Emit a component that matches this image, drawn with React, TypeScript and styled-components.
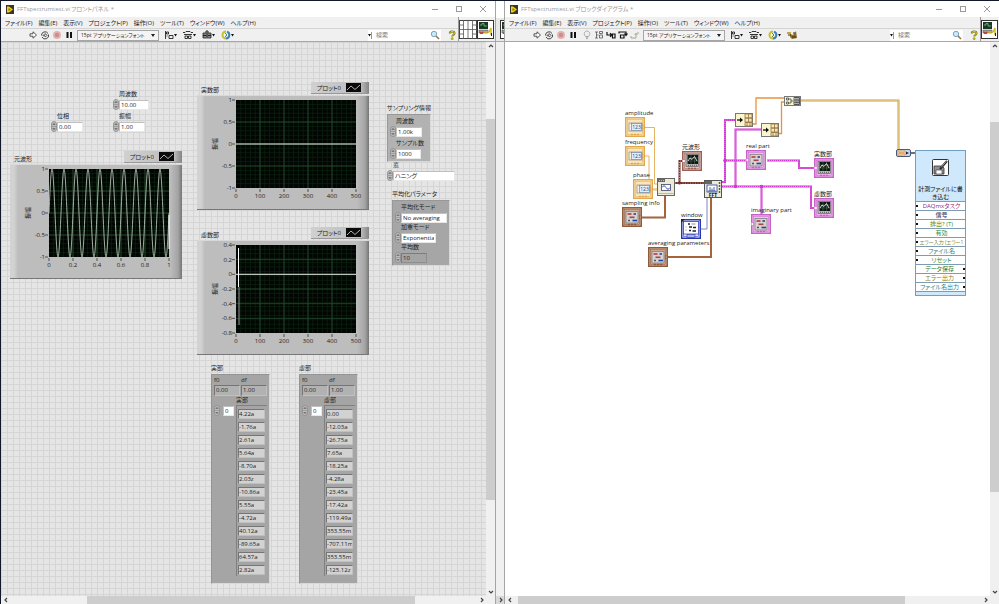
import React from "react";
import styled, { createGlobalStyle, css } from "styled-components";

const GlobalStyle = createGlobalStyle`
  * { box-sizing: border-box; }
  html, body { margin: 0; padding: 0; }
  body {
    font-family: "Open Sans", "Noto Sans CJK JP", sans-serif;
    font-size: 6px;
    line-height: 8px;
    font-feature-settings: "palt";
    color: #222;
    overflow: hidden;
  }
  button, input, select { font: inherit; font-feature-settings: inherit; color: inherit; margin: 0; padding: 0; border: 0; background: none; }
  svg { display: block; }
`;

/* ---------- window chrome ---------- */

const Desktop = styled.div`
  display: flex;
  height: 100vh;
  padding: 1px 0 0 1px;
  background: #12182c;
`;

const Window = styled.section`
  flex: 1 1 0;
  min-width: 0;
  display: flex;
  flex-direction: column;
  background: #f0f0f0;
`;

const TitleBar = styled.header`
  display: flex;
  align-items: center;
  height: 16px;
  flex: none;
  padding: 0 7px 0 5px;
  gap: 3px;
  background: #fff;
  color: #999;
`;

const Title = styled.h1`
  flex: 1;
  margin: 0;
  font-size: 6px;
  font-weight: 400;
  white-space: nowrap;
`;

const WindowButtons = styled.div`
  display: flex;
  gap: 14px;
`;

const IconButton = styled.button<{ $w?: number }>`
  width: ${(p) => p.$w ?? 10}px;
  height: 10px;
  flex: none;
  display: flex;
  align-items: center;
  justify-content: center;
`;

const Header = styled.div`
  display: flex;
  flex: none;
  height: 25px;
  border-bottom: 1px solid #a8a8a8;
`;

const Bars = styled.div`
  flex: 1;
  min-width: 0;
`;

const MenuBar = styled.nav`
  display: flex;
  gap: 6px;
  height: 11px;
  padding-left: 4px;
  align-items: center;
  white-space: nowrap;
`;

const ToolBar = styled.div<{ $indent: number }>`
  display: flex;
  align-items: center;
  height: 13px;
  padding-left: ${(p) => p.$indent}px;
  border-top: 1px solid #d4d4d4;
`;

const ToolGroup = styled.div<{ $gap: number; $left?: number }>`
  display: flex;
  align-items: center;
  gap: ${(p) => p.$gap}px;
  margin-left: ${(p) => p.$left ?? 0}px;
`;

const FontSelect = styled.select`
  appearance: none;
  width: 82px;
  height: 11px;
  margin-left: 3px;
  padding: 0 8px 0 3px;
  font-size: 5px;
  border: 1px solid #a6a6a6;
  background: #f4f4f4 url("data:image/svg+xml,%3Csvg xmlns='http://www.w3.org/2000/svg' width='4' height='3'%3E%3Cpath d='M0 0h4L2 3z' fill='%23222'/%3E%3C/svg%3E") no-repeat right 3px center;
`;

const Search = styled.label`
  display: flex;
  align-items: center;
  margin-left: auto;
  width: 73px;
  height: 11px;
  background: #fff;
  padding-right: 1px;
`;

const SearchInput = styled.input`
  flex: 1;
  min-width: 0;
  height: 7px;
  padding-left: 4px;
  border-left: 1px solid #999;
  &::placeholder { color: #777; opacity: 1; }
`;

const HelpButton = styled(IconButton)`
  margin: 0 1px 0 6px;
`;

const Panes = styled.div`
  display: flex;
  padding: 3px 1px 2px 0;
  border-left: 1px solid #999;
`;

const Body = styled.div`
  flex: 1;
  min-height: 0;
  display: grid;
  grid-template-columns: 1fr 9px;
  grid-template-rows: 1fr 8px;
`;

const Canvas = styled.main<{ $grid?: boolean }>`
  position: relative;
  overflow: hidden;
  background-color: #fff;
  ${(p) =>
    p.$grid &&
    css`
      background-color: #e5e5e5;
      background-image: linear-gradient(#d5d5d5 1px, transparent 1px), linear-gradient(90deg, #d5d5d5 1px, transparent 1px);
      background-size: 6px 6px;
    `}
`;

const ScrollTrack = styled.div<{ $vertical?: boolean }>`
  display: flex;
  flex-direction: ${(p) => (p.$vertical ? "column" : "row")};
  justify-content: space-between;
  align-items: stretch;
  background: #f0f0f0;
`;

const ScrollSpace = styled.div<{ $grow: number; $thumb?: boolean }>`
  flex: ${(p) => p.$grow} 1 0;
  background: ${(p) => (p.$thumb ? "#cdcdcd" : "transparent")};
`;

const ScrollButton = styled.button`
  width: 9px;
  height: 8px;
  flex: none;
  display: flex;
  align-items: center;
  justify-content: center;
`;

const Sliver = styled.div`
  width: 10px;
  flex: none;
  display: flex;
  flex-direction: column;
  justify-content: space-between;
  background: #f0f0f0;
  border-left: 1px solid #a4a4a4;
  border-right: 1px solid #a4a4a4;
`;

const SliverTop = styled.div`
  height: 41px;
  padding-top: 19px;
  padding-left: 4px;
  overflow: hidden;
  border-bottom: 1px solid #aaa;
  background: linear-gradient(#fff 17px, #e8e8e8 17px);
`;

const SliverEnd = styled.div`
  display: flex;
  justify-content: flex-end;
  align-items: center;
  height: 8px;
  background: #d8d8d8;
`;

const Arrow = ({ dir }: { dir: "up" | "down" | "left" | "right" }) => {
  const d = { up: "M1 4L3 2L5 4", down: "M1 2L3 4L5 2", left: "M4 1L2 3L4 5", right: "M2 1L4 3L2 5" }[dir];
  return (
    <svg width="6" height="6" viewBox="0 0 6 6">
      <path d={d} fill="none" stroke="#444" strokeWidth="1.2" />
    </svg>
  );
};

const AppIcon = () => (
  <svg width="8" height="9" viewBox="0 0 8 9">
    <rect width="8" height="9" fill="#3a3524" />
    <path d="M1 1.5h2L7 4.5 3 7.5H1z" fill="#f2d21b" />
    <path d="M2.500 3L5 4.500 2.500 6z" fill="#8a7410" />
  </svg>
);

const Caret = () => (
  <svg width="3" height="3" viewBox="0 0 3 3">
    <path d="M0 0h3L1.500 2.500z" fill="#111" />
  </svg>
);

const icons: Record<string, React.ReactNode> = {
  run: <path d="M2 3.800h3V1.800L8.500 5 5 8.200V6.200H2z" fill="#fff" stroke="#444" strokeWidth=".9" />,
  cont: (
    <g fill="none" stroke="#444" strokeWidth="1">
      <path d="M1.500 5.500a3.500 3.500 0 0 1 6.500-2M8.500 4.500a3.500 3.500 0 0 1-6.500 2.500" />
      <path d="M3 5h2V3.500L7.300 5.300 5 7V5.800H3z" strokeWidth=".7" />
    </g>
  ),
  stop: (
    <g>
      <circle cx="5" cy="5" r="4" fill="#e0b4b4" />
      <circle cx="5" cy="5" r="2.200" fill="#cf8d8d" />
    </g>
  ),
  pause: <path d="M2.500 2h2v6h-2zM6 2h2v6H6z" fill="#111" />,
  bulb: <path d="M3.500 6.500C.8 3.500 3 1 5 1s4.200 2.500 1.500 5.500zM3.800 7.200h2.400M4 8.600h2" fill="#eee" stroke="#999" strokeWidth=".8" />,
  retain: <path d="M1 2h3M2.500 2v6M2.500 5h2M5.500 1.500h3v2h-3zM5.500 5h3v3h-3zM1 8h3" fill="none" stroke="#555" strokeWidth=".8" />,
  into: <path d="M1 2v3h4M4 3.200L6 5 4 6.800M6.500 4H9v4H6.500z" fill="none" stroke="#111" strokeWidth="1.200" />,
  over: <path d="M1 3.500V2h7v2.500M6.500 3.500L8 5.500l1.500-2M2.500 5H6v3H2.500z" fill="none" stroke="#111" strokeWidth="1.200" />,
  out: <path d="M1 6v2h5V4M4.700 5L6 3.200 7.500 5M7 3h2" fill="none" stroke="#aaa48c" strokeWidth="1" />,
  align: <path d="M1.500 1v8M2.500 2h2v2h-2zM2.500 6h1M5 5.500h4v3H5z" fill="none" stroke="#222" strokeWidth=".9" />,
  dist: <path d="M0 2.500h2l1-1h4l1 1h2M1 4.500h8M2 6h2.500v2.500H2zM5.500 6H8v2.500H5.500z" fill="none" stroke="#222" strokeWidth=".9" />,
  resize: (
    <g>
      <path d="M1 3h8v5H1z" fill="#888" stroke="#222" strokeWidth=".8" />
      <path d="M5 0v2M1 5.500h3M6 5.500h3M3 2h4M5 4v3" stroke="#222" strokeWidth="1" />
    </g>
  ),
  order: (
    <g fill="none" strokeWidth="2">
      <path d="M5 1.500A3.500 3.500 0 1 0 5 8.500" stroke="#c9be2c" />
      <path d="M5 8.500A3.500 3.500 0 0 0 6 1.700" stroke="#3e83b8" />
      <path d="M4 3l2 2-2 2" stroke="#4b8d4e" strokeWidth="1" />
    </g>
  ),
  clean: (
    <g>
      <path d="M0 2h4v2H0z" fill="#caa13a" />
      <path d="M3 4l3 1 3-4 1 7-5 1-2-2z" fill="#8c6d23" />
      <path d="M1 5h3M5 7h4M6 3h2" stroke="#3b2d10" strokeWidth="1" />
    </g>
  ),
  mag: (
    <g>
      <circle cx="4" cy="4" r="2.700" fill="#cfe8f7" stroke="#78a8c8" strokeWidth="1" />
      <path d="M6 6l3 3" stroke="#a5713c" strokeWidth="1.600" />
    </g>
  ),
  help: (
    <g>
      <path d="M2.800 3.500C2.800 .8 7.500 .8 7.500 3.300 7.500 5 5.200 5 5.200 6.600" fill="none" stroke="#6f6914" strokeWidth="2" />
      <path d="M2.800 3.500C2.800 .8 7.500 .8 7.500 3.300 7.500 5 5.200 5 5.200 6.600" fill="none" stroke="#dcd42a" strokeWidth="1" />
      <circle cx="5.200" cy="8.700" r="1.100" fill="#c9c022" stroke="#6f6914" strokeWidth=".4" />
    </g>
  ),
};

const Glyph = ({ name }: { name: string }) => (
  <svg width="10" height="10" viewBox="0 0 10 10">
    {icons[name]}
  </svg>
);

const Tool = ({ name, label, menu }: { name: string; label: string; menu?: boolean }) => (
  <IconButton aria-label={label} $w={menu ? 13 : 10}>
    <Glyph name={name} />
    {menu && <Caret />}
  </IconButton>
);

const ConnectorPane = () => (
  <svg width="18" height="19" viewBox="0 0 18 19">
    <rect x=".5" y=".5" width="17" height="18" fill="#fff" stroke="#444" />
    <path d="M4.500 0v19M9 0v19M13.500 0v19M0 5h4.500M0 9.500h18M0 14h4.500M13.500 5H18M13.500 14H18" stroke="#555" strokeWidth=".8" />
  </svg>
);

const ViIcon = () => (
  <svg width="17" height="19" viewBox="0 0 17 19">
    <rect x=".5" y=".5" width="16" height="18" fill="#fff" stroke="#333" />
    <rect x="2" y="2" width="9" height="7" fill="#1c3524" />
    <path d="M3 5h2V3.500h2V6h3" stroke="#56b36f" fill="none" />
    <path d="M2 10h9v3H2z" fill="#9a9a9a" stroke="#444" strokeWidth=".5" />
    <path d="M7 12h5l2-4v7" stroke="#d5b422" strokeWidth="1.400" fill="none" />
    <path d="M3 12h3v2H3z" fill="#b7493b" />
    <path d="M14.500 13v3" stroke="#222" />
  </svg>
);

const MENUS = ["ファイル(F)", "編集(E)", "表示(V)", "プロジェクト(P)", "操作(O)", "ツール(T)", "ウィンドウ(W)", "ヘルプ(H)"];

interface FrameProps {
  title: string;
  indent: number;
  diagram?: boolean;
  vScroll: [number, number, number];
  hScroll: [number, number, number];
  children: React.ReactNode;
}

const Scroll = ({ parts, vertical }: { parts: [number, number, number]; vertical?: boolean }) => (
  <ScrollTrack $vertical={vertical}>
    <ScrollButton aria-label={vertical ? "上へ" : "左へ"}>
      <Arrow dir={vertical ? "up" : "left"} />
    </ScrollButton>
    <ScrollSpace $grow={parts[0]} />
    <ScrollSpace $grow={parts[1]} $thumb />
    <ScrollSpace $grow={parts[2]} />
    <ScrollButton aria-label={vertical ? "下へ" : "右へ"}>
      <Arrow dir={vertical ? "down" : "right"} />
    </ScrollButton>
  </ScrollTrack>
);

const Frame = ({ title, indent, diagram, vScroll, hScroll, children }: FrameProps) => (
  <Window>
    <TitleBar>
      <AppIcon />
      <Title>{title}</Title>
      <WindowButtons>
        <IconButton aria-label="最小化">
          <svg width="10" height="10"><path d="M2 5.500h6" stroke="#999" /></svg>
        </IconButton>
        <IconButton aria-label="最大化">
          <svg width="10" height="10"><rect x="2.500" y="2.500" width="5" height="5" fill="none" stroke="#999" /></svg>
        </IconButton>
        <IconButton aria-label="閉じる">
          <svg width="10" height="10"><path d="M2 2l6 6M8 2l-6 6" stroke="#999" /></svg>
        </IconButton>
      </WindowButtons>
    </TitleBar>
    <Header>
      <Bars>
        <MenuBar>
          {MENUS.map((m) => (
            <button key={m}>{m}</button>
          ))}
        </MenuBar>
        <ToolBar $indent={indent}>
          <ToolGroup $gap={2}>
            <Tool name="run" label="実行" />
            <Tool name="cont" label="連続実行" />
            <Tool name="stop" label="停止" />
            <Tool name="pause" label="一時停止" />
          </ToolGroup>
          {diagram && (
            <ToolGroup $gap={2} $left={4}>
              <Tool name="bulb" label="実行のハイライト" />
              <Tool name="retain" label="ワイヤ値を保持" />
              <Tool name="into" label="ステップイン" />
              <Tool name="over" label="ステップオーバー" />
              <Tool name="out" label="ステップアウト" />
            </ToolGroup>
          )}
          <FontSelect aria-label="フォント" defaultValue="app">
            <option value="app">15pt アプリケーションフォント</option>
          </FontSelect>
          <ToolGroup $gap={6} $left={5}>
            <Tool name="align" label="整列" menu />
            <Tool name="dist" label="間隔" menu />
            {!diagram && <Tool name="resize" label="サイズ変更" menu />}
            <Tool name="order" label="並べ替え" menu />
            {diagram && <Tool name="clean" label="ダイアグラムをクリーンアップ" />}
          </ToolGroup>
          <Search>
            <Caret />
            <SearchInput type="text" placeholder="検索" aria-label="検索" />
            <Glyph name="mag" />
          </Search>
          <HelpButton aria-label="ヘルプ">
            <Glyph name="help" />
          </HelpButton>
        </ToolBar>
      </Bars>
      <Panes>
        {!diagram && <ConnectorPane />}
        <ViIcon />
      </Panes>
    </Header>
    <Body>
      <Canvas $grid={!diagram}>{children}</Canvas>
      <Scroll parts={vScroll} vertical />
      <Scroll parts={hScroll} />
    </Body>
  </Window>
);

/* ---------- front panel ---------- */

/* Objects sit freely on the panel and diagram canvases. */
const Item = styled.div<{ $x: number; $y: number; $w?: number }>`
  position: absolute;
  left: ${(p) => p.$x}px;
  top: ${(p) => p.$y}px;
  ${(p) => p.$w && `width: ${p.$w}px;`}
  white-space: nowrap;
`;

const FieldLabel = styled.label`
  display: block;
  height: 9px;
  padding-left: 6px;
`;

const FieldRow = styled.div`
  display: flex;
  align-items: center;
  height: 11px;
`;

const FieldInput = styled.input<{ $w: number; $off?: boolean }>`
  width: ${(p) => p.$w}px;
  height: 10px;
  padding: 0 1px;
  background: ${(p) => (p.$off ? "#a4a4a4" : "#fff")};
  border: 1px solid ${(p) => (p.$off ? "#8e8e8e" : "#e8e8e8")};
  border-top-color: ${(p) => (p.$off ? "#7c7c7c" : "#c0c0c0")};
  border-left-color: ${(p) => (p.$off ? "#7c7c7c" : "#c0c0c0")};
`;

const Spinner = () => (
  <svg width="6" height="11" viewBox="0 0 6 11">
    <rect x=".5" y=".5" width="5" height="10" rx="2.500" fill="#bdbdbd" stroke="#8a8a8a" strokeWidth=".8" />
    <path d="M1.800 4L3 2.500 4.200 4M1.800 7L3 8.500 4.200 7" fill="none" stroke="#444" strokeWidth=".8" />
    <path d="M1 5.500h4" stroke="#888" strokeWidth=".6" />
  </svg>
);

const Field = ({ id, label, value, w, off }: { id: string; label: string; value: string; w: number; off?: boolean }) => (
  <div>
    <FieldLabel htmlFor={id}>{label}</FieldLabel>
    <FieldRow>
      <Spinner />
      <FieldInput id={id} defaultValue={value} $w={w} $off={off} />
    </FieldRow>
  </div>
);

const Caption = styled.div`
  height: 10px;
`;

const Cluster = styled.div<{ $dark?: boolean }>`
  display: flex;
  flex-direction: column;
  gap: ${(p) => (p.$dark ? 0 : 2)}px;
  padding: 2px;
  background: ${(p) => (p.$dark ? "#a6a6a6" : "#b2b2b2")};
  border: 1px solid;
  border-color: #989898 #d8d8d8 #d8d8d8 #989898;
`;

const ChartHead = styled.div`
  display: flex;
  justify-content: space-between;
  align-items: flex-start;
  height: 13px;
`;

const ChartName = styled.span`
  padding: 4px 0 0 4px;
`;

const Legend = styled.div`
  display: flex;
  align-items: center;
  justify-content: flex-end;
  gap: 5px;
  width: 58px;
  height: 12px;
  padding-right: 8px;
  background: linear-gradient(90deg, #d0d0d0, #bcbcbc 50px, #858585);
  border-bottom: 1px solid #989898;
`;

const ChartPanel = styled.div`
  background: linear-gradient(90deg, #d2d2d2 4px, #bdbdbd 8px, #bdbdbd 160px, #a4a4a4 168px, #757575);
  border-bottom: 1px solid #777;
  border-top: 1px solid #d8d8d8;
`;

interface ChartProps {
  name: string;
  x: number;
  y: number;
  xTicks: string[];
  yTicks: string[];
  children: React.ReactNode;
}

const PLOT = { x: 39, y: 4, w: 120, h: 88 };

const Chart = ({ name, x, y, xTicks, yTicks, children }: ChartProps) => (
  <Item $x={x} $y={y} $w={172}>
    <ChartHead>
      <ChartName>{name}</ChartName>
      <Legend>
        プロット0
        <svg width="15" height="9" viewBox="0 0 15 9">
          <rect width="15" height="9" fill="#0a0a0a" />
          <path d="M1 7l4-4 4 3.500L14 2" fill="none" stroke="#ddd" strokeWidth=".8" />
        </svg>
      </Legend>
    </ChartHead>
    <ChartPanel>
      <svg width="172" height="113" viewBox="0 0 172 113" fontSize="6" fill="#222">
        <g transform={`translate(${PLOT.x} ${PLOT.y})`}>
          <rect width={PLOT.w} height={PLOT.h} fill="#020602" />
          <g stroke="#0c2412" strokeWidth=".7">
            {Array.from({ length: 24 }, (_, i) => (
              <path key={`v${i}`} d={`M${(i + 1) * 4.8} 0V${PLOT.h}`} />
            ))}
            {Array.from({ length: 19 }, (_, i) => (
              <path key={`h${i}`} d={`M0 ${(i + 1) * 4.4}H${PLOT.w}`} />
            ))}
          </g>
          <g stroke="#24502f" strokeWidth=".8">
            {xTicks.slice(1, -1).map((t, i) => (
              <path key={t} d={`M${((i + 1) * PLOT.w) / (xTicks.length - 1)} 0V${PLOT.h}`} />
            ))}
            {yTicks.slice(1, -1).map((t, i) => (
              <path key={t} d={`M0 ${((i + 1) * PLOT.h) / (yTicks.length - 1)}H${PLOT.w}`} />
            ))}
          </g>
          {children}
          {xTicks.map((t, i) => {
            const px = (i * PLOT.w) / (xTicks.length - 1);
            return (
              <g key={t}>
                <path d={`M${px} ${PLOT.h + 1}v3`} stroke="#333" strokeWidth=".8" />
                <text x={px} y={PLOT.h + 10} textAnchor="middle">{t}</text>
              </g>
            );
          })}
          {yTicks.map((t, i) => {
            const py = (i * PLOT.h) / (yTicks.length - 1);
            return (
              <g key={t}>
                <path d={`M-4 ${py}h3`} stroke="#333" strokeWidth=".8" />
                <text x="-4" y={py + 2} textAnchor="end">{t}</text>
              </g>
            );
          })}
          <text transform="translate(-19 44) rotate(-90)" textAnchor="middle">振幅</text>
        </g>
      </svg>
    </ChartPanel>
  </Item>
);

const sine = Array.from({ length: 481 }, (_, i) => {
  const t = i / 480;
  return `${(t * 120).toFixed(2)},${(44 - 44 * Math.sin(t * 20 * Math.PI)).toFixed(2)}`;
}).join(" ");

const ArrayPanel = styled.div`
  width: 59px;
  padding: 1px 2px 7px;
  background: #a5a5a5;
  border: 1px solid;
  border-color: #949494 #d8d8d8 #d8d8d8 #949494;
`;

const Pair = styled.div`
  display: grid;
  grid-template-columns: 1fr 1fr;
  gap: 1px;
`;

const Readout = styled.output`
  display: block;
  height: 11px;
  padding: 0 1px;
  overflow: hidden;
  background: #b2b2b2;
  border: 1px solid;
  border-color: #757575 #c0c0c0 #c0c0c0 #757575;
`;

const ArrayName = styled.div`
  padding-left: 22px;
  height: 9px;
`;

const ArrayBody = styled.div`
  display: grid;
  grid-template-columns: 22px minmax(0, 1fr);
  align-items: start;
`;

const IndexCell = styled.div`
  display: flex;
  align-items: center;
  gap: 3px;
`;

const CellList = styled.div`
  display: flex;
  flex-direction: column;
  gap: 3px;
  padding: 3px 2px 1px 1px;
  border-left: 1px solid #808080;
  border-top: 1px solid #808080;
`;

const Cell = styled(Readout)`
  height: 10px;
  background: #d2d2d2;
  padding: 0;
`;

const ArrayView = ({ name, x, values }: { name: string; x: number; values: string[] }) => (
  <Item $x={x} $y={322}>
    <Caption>{name}</Caption>
    <ArrayPanel>
      <Pair>
        <span>f0</span>
        <span>df</span>
        <Readout>0.00</Readout>
        <Readout>1.00</Readout>
      </Pair>
      <ArrayName>{name}</ArrayName>
      <ArrayBody>
        <IndexCell>
          <Spinner />
          <FieldInput aria-label={`${name} 指標`} defaultValue="0" $w={11} />
        </IndexCell>
        <CellList>
          {values.map((v, i) => (
            <Cell key={i}>{v}</Cell>
          ))}
        </CellList>
      </ArrayBody>
    </ArrayPanel>
  </Item>
);

const REAL = ["4.22a", "-1.76a", "2.61a", "5.64a", "-8.70a", "2.03z", "-10.86a", "5.55a", "-4.72a", "40.12a", "-89.65a", "64.57a", "2.82a"];
const IMAG = ["0.00", "-12.03a", "-26.75a", "7.65a", "-18.25a", "-4.28a", "-23.45a", "-17.42a", "-119.49a", "353.55m", "-707.11m", "353.55m", "-125.12z"];

const FrontPanel = () => (
  <>
    <Item $x={50} $y={70}><Field id="phase" label="位相" value="0.00" w={26} /></Item>
    <Item $x={112} $y={48}><Field id="freq" label="周波数" value="10.00" w={30} /></Item>
    <Item $x={112} $y={70}><Field id="amp" label="振幅" value="1.00" w={26} /></Item>

    <Chart name="元波形" x={9} y={109} xTicks={["0", "0.2", "0.4", "0.6", "0.8", "1"]} yTicks={["1", "0.5", "0", "-0.5", "-1"]}>
      <polyline points={sine} fill="none" stroke="#b4c2b4" strokeWidth=".9" />
      <path d="M120 46V80" stroke="#fff" />
    </Chart>
    <Chart name="実数部" x={196} y={40} xTicks={["0", "100", "200", "300", "400", "500"]} yTicks={["1", "0.5", "0", "-0.5", "-1"]}>
      <path d="M0 44H120" stroke="#e6e6e6" />
    </Chart>
    <Chart name="虚数部" x={196} y={185} xTicks={["0", "100", "200", "300", "400", "500"]} yTicks={["0.4", "0.2", "0", "-0.2", "-0.4", "-0.6", "-0.8"]}>
      <path d="M0 29.300H120" stroke="#e6e6e6" />
      <path d="M2.500 3V42" stroke="#fff" />
      <path d="M3 42V80" stroke="#999" />
    </Chart>

    <Item $x={386} $y={62}>
      <Caption>サンプリング情報</Caption>
      <Cluster>
        <Field id="s-freq" label="周波数" value="1.00k" w={26} />
        <Field id="s-count" label="サンプル数" value="1000" w={25} />
      </Cluster>
    </Item>
    <Item $x={386} $y={119}><Field id="win" label="窓" value="ハニング" w={62} /></Item>
    <Item $x={391} $y={148}>
      <Caption>平均化パラメータ</Caption>
      <Cluster $dark>
        <Field id="a-mode" label="平均化モード" value="No averaging" w={46} />
        <Field id="a-weight" label="加重モード" value="Exponentia" w={35} />
        <Field id="a-count" label="平均数" value="10" w={26} off />
      </Cluster>
    </Item>

    <ArrayView name="実部" x={210} values={REAL} />
    <ArrayView name="虚部" x={298} values={IMAG} />
  </>
);

/* ---------- block diagram ---------- */

const WireLayer = styled.svg`
  position: absolute;
  left: 0;
  top: 0;
`;

const WIRES = {
  thin: ["M140 85.500H149.500V142H152", "M140 114H144V148H152", "M147 147H152"],
  brown: ["M137 175.500H160V154", "M163 215H206V155"],
  wave: ["M170 141H199", "M174.500 141V119H178"],
  magenta: [
    "M216 140H220V78H230", "M220 118.500H241", "M216 144.500H306V166H309",
    "M230.500 144.500V87.500H256", "M256.500 144.500V172", "M262 118.500H294V126H309",
  ],
  orange: ["M248 82H251V56H279", "M274 91.500H276.500V60H279"],
};

const Wires = () => (
  <WireLayer width="480" height="300" viewBox="0 0 480 300" fill="none">
    {WIRES.thin.map((d) => <path key={d} d={d} stroke="#e3b563" />)}
    {WIRES.brown.map((d) => <path key={d} d={d} stroke="#a4643c" strokeWidth="2" />)}
    {WIRES.wave.map((d) => (
      <g key={d}>
        <path d={d} stroke="#6e2f28" strokeWidth="2" />
        <path d={d} stroke="#d59a8e" strokeWidth="1" strokeDasharray="1 1.500" />
      </g>
    ))}
    {WIRES.magenta.map((d) => (
      <g key={d}>
        <path d={d} stroke="#cf39cf" strokeWidth="2" />
        <path d={d} stroke="#f0a8f0" strokeWidth=".7" strokeDasharray="1 1" />
      </g>
    ))}
    {WIRES.orange.map((d) => <path key={d} d={d} stroke="#e8943c" strokeWidth="1.300" />)}
    <path d="M196 187H202V155" stroke="#7c86c8" />
    <path d="M296 58.500H393.500V108" stroke="#caa044" strokeWidth="2" />
    <path d="M296 58.500H393.500V108" stroke="#ecd9a0" strokeWidth=".6" />
    <path d="M406 111H410" stroke="#345" strokeWidth="1.500" />
    <circle cx="174.500" cy="141" r="1.500" fill="#7c2f28" />
    <g fill="#cf39cf">
      <circle cx="220" cy="118.500" r="1.800" />
      <circle cx="230.500" cy="144.500" r="1.800" />
      <circle cx="256.500" cy="144.500" r="1.800" />
    </g>
  </WireLayer>
);

const NodeLabel = styled.div`
  height: 8px;
`;

type Kind = "num" | "cluster" | "pink" | "graph" | "pinkGraph" | "text";

const COLORS: Record<Kind, [string, string]> = {
  num: ["#e2a84c", "#fbe6bb"],
  cluster: ["#8e5b3c", "#cda88f"],
  pink: ["#c763c7", "#efc0ef"],
  graph: ["#9c5f56", "#e6c3bc"],
  pinkGraph: ["#c763c7", "#efb5ef"],
  text: ["#2a35b0", "#dfe3fb"],
};

const Terminal = ({ kind }: { kind: Kind }) => {
  const [edge, fill] = COLORS[kind];
  const graph = kind === "graph" || kind === "pinkGraph";
  return (
    <svg width="20" height="20" viewBox="0 0 20 20">
      <rect x=".7" y=".7" width="18.600" height="18.600" fill={fill} stroke={edge} strokeWidth="1.400" />
      <rect x="2.500" y="2.500" width="15" height="15" fill="none" stroke={edge} strokeWidth=".5" />
      <path d="M6 17.500h8" stroke={edge} strokeWidth="1.400" strokeDasharray="2 1" />
      {kind === "num" && (
        <g>
          <rect x="4" y="6" width="13" height="8" fill="#f4efe2" stroke="#8b8b8b" strokeWidth=".7" />
          <rect x="6.500" y="6.500" width="10" height="7" fill="#e6edf9" stroke="#5b78a2" strokeWidth=".6" />
          <text x="11.500" y="12" fontSize="5" textAnchor="middle" fill="#1d3d7c">123</text>
          <path d="M17.500 8.500l2 1.500-2 1.500z" fill="#fff" stroke="#b87b1f" strokeWidth=".5" />
        </g>
      )}
      {(kind === "cluster" || kind === "pink") && (
        <g>
          <rect x="4" y="4.500" width="12" height="11.500" fill="#d6d3d0" stroke="#777" strokeWidth=".7" />
          <path d="M5.500 7h4" stroke="#b23a48" strokeWidth="1.600" />
          <path d="M11.500 7H14" stroke="#444f90" strokeWidth="1.800" />
          <path d="M7.500 10.300h5" stroke="#a8434b" strokeWidth="1.600" />
          <path d="M6 13.500h2" stroke="#555" strokeWidth="1.600" />
          <path d="M10.500 13.500h4.500" stroke="#243fa8" strokeWidth="1.600" />
          {kind === "pink" ? <path d="M.5 8.500h2v3h-2" fill="#fff" stroke={edge} strokeWidth=".6" /> : <path d="M17.500 8.500l2 1.500-2 1.500z" fill="#fff" stroke="#5c3a25" strokeWidth=".6" />}
        </g>
      )}
      {graph && (
        <g>
          <rect x="4" y="3.500" width="12.500" height="12" fill="#bbb" stroke="#555" strokeWidth=".6" />
          <rect x="5.500" y="4" width="10.500" height="9" fill="#0c1a12" />
          <path d="M9 4v9M12.500 4v9M5.500 7h10.500M5.500 10h10.500" stroke="#58705e" strokeWidth=".5" />
          <path d="M6 10l2-3 2 1.500 2.500-3L15 10" fill="none" stroke="#fff" strokeWidth=".8" />
          <path d="M6 14.300h9" stroke="#444" strokeWidth=".8" strokeDasharray="1 1" />
          <path d="M.5 8.500h2l1 1.500-1 1.500h-2" fill="#fff" stroke={edge} strokeWidth=".6" />
        </g>
      )}
      {kind === "text" && (
        <g>
          <rect x="2.500" y="2.500" width="15" height="12.500" fill="#fff" stroke="#2a35b0" strokeWidth=".7" />
          <path d="M7 5h2M8 8h3M12 8.500h3M8 11.500h2M11.500 12h3.500" stroke="#222" strokeWidth="1.300" />
          <path d="M4.500 8h1M4.500 11h1M10.500 5h4" stroke="#777" strokeWidth=".8" />
          <path d="M0 0h4L0 4z" fill="#222" />
          <rect x="6" y="15.500" width="8" height="3" fill="#a8b4ee" stroke="#2a35b0" strokeWidth=".6" />
          <path d="M17.500 8.500l2 1.500-2 1.500z" fill="#fff" stroke="#2a35b0" strokeWidth=".6" />
        </g>
      )}
    </svg>
  );
};

const NODES: { label: string; kind: Kind; x: number; y: number }[] = [
  { label: "amplitude", kind: "num", x: 120, y: 67 },
  { label: "frequency", kind: "num", x: 120, y: 96 },
  { label: "phase", kind: "num", x: 128, y: 129 },
  { label: "sampling info", kind: "cluster", x: 117, y: 157 },
  { label: "window", kind: "text", x: 176, y: 169 },
  { label: "averaging parameters", kind: "cluster", x: 143, y: 197 },
  { label: "元波形", kind: "graph", x: 177, y: 101 },
  { label: "real part", kind: "pink", x: 241, y: 100 },
  { label: "imaginary part", kind: "pink", x: 246, y: 164 },
  { label: "実数部", kind: "pinkGraph", x: 309, y: 108 },
  { label: "虚数部", kind: "pinkGraph", x: 309, y: 148 },
];

const IndexNode = () => (
  <svg width="18" height="14" viewBox="0 0 18 14">
    <rect x=".5" y=".5" width="17" height="13" fill="#faf6d0" stroke="#777" />
    <path d="M2 7h4" stroke="#111" strokeWidth="1.300" />
    <path d="M5 4.500L8 7 5 9.500z" fill="#111" />
    <path d="M10 1h7v4h-7zM10 5h7v4h-7zM10 9.500h7v3.500h-7zM13.500 1v8M12 9.500V13M15 9.500V13" fill="#f6e6bd" stroke="#94753a" strokeWidth=".8" />
  </svg>
);

const BuildNode = () => (
  <svg width="17" height="10" viewBox="0 0 17 10">
    <rect x=".5" y=".5" width="16" height="9" fill="#faf6d0" stroke="#777" />
    <path d="M2.500 2h2v2h-2zM2.500 6h2v2h-2zM5 3h2v4H5M7 5h2" fill="none" stroke="#444" strokeWidth=".8" />
    <path d="M10 1.500h5.500v7H10zM10 4h5.500M10 6.300h5.500M12 1.500v7M14 1.500v7" fill="#fff" stroke="#333" strokeWidth=".8" />
  </svg>
);

const SimNode = () => (
  <svg width="18" height="18" viewBox="0 0 18 18">
    <rect x=".5" y=".5" width="17" height="17" fill="#ecebd8" stroke="#666" />
    <rect x="1" y="1" width="7" height="3" fill="#666" />
    <path d="M2 2.500h5" stroke="#fff" strokeWidth=".6" strokeDasharray="1 1" />
    <rect x="4.500" y="6.500" width="9" height="6" fill="#fff" stroke="#446" strokeWidth=".8" />
    <path d="M5 9.500q2-3.500 4 0t4 0" fill="none" stroke="#2a4bb0" strokeWidth=".9" />
    <path d="M1 15.500h16" stroke="#bbb" />
  </svg>
);

const FftNode = () => (
  <svg width="18" height="18" viewBox="0 0 18 18">
    <rect x=".5" y=".5" width="17" height="17" fill="#ecebd8" stroke="#555" />
    <rect x="1" y="1" width="7" height="3" fill="#666" />
    <rect x="3" y="5" width="10" height="7" fill="#fff" stroke="#223c9c" strokeWidth=".8" />
    <path d="M4 11h8M6 11V7M8 11V8.500M10 11V7" stroke="#223c9c" strokeWidth=".8" />
    <path d="M15.500 2v12" stroke="#555" strokeWidth="1.400" strokeDasharray="2 1" />
    <text x="9" y="17" fontSize="5" fontWeight="700" textAnchor="middle" fill="#111">FFT</text>
  </svg>
);

const ConvertNode = () => (
  <svg width="15" height="8" viewBox="0 0 15 8">
    <rect x=".5" y=".5" width="14" height="7" rx="1.500" fill="#cfd9ea" stroke="#46587c" />
    <rect x="2" y="2" width="7" height="4" fill="#f6e7c0" stroke="#c9822c" strokeWidth=".7" />
    <path d="M3 4h3M7 3v2" stroke="#d46f1a" />
    <path d="M10 2.500L13 4l-3 1.500z" fill="#223" />
  </svg>
);

const Express = styled.div`
  border: 1px solid #6f9fc4;
  background: #cfe8fb;
`;

const ExpressHead = styled.div`
  display: flex;
  flex-direction: column;
  align-items: center;
  justify-content: flex-end;
  gap: 9px;
  height: 50px;
  text-align: center;
  color: #111;
`;

const ExpressRow = styled.div<{ $color: string; $out?: boolean; $long?: boolean }>`
  height: 9px;
  border-top: 1px solid #7d9cb4;
  background: #fff;
  color: ${(p) => p.$color};
  font-size: ${(p) => (p.$long ? 5 : 6)}px;
  display: flex;
  flex-direction: ${(p) => (p.$out ? "row-reverse" : "row")};
  align-items: center;
`;

const Pin = styled.i`
  width: 2px;
  height: 2px;
  flex: none;
  background: #111;
`;

const RowText = styled.span`
  flex: 1;
  text-align: center;
`;

const ExpressFoot = styled.div`
  height: 4px;
  border-top: 1px solid #7d9cb4;
`;

const ROWS: { text: string; color: string; out?: boolean; long?: boolean }[] = [
  { text: "DAQmxタスク", color: "#8a2a80" },
  { text: "信号", color: "#222a50" },
  { text: "排出? (T)", color: "#2f8a3a" },
  { text: "有効", color: "#2f8a3a" },
  { text: "エラー入力 (エラー1", color: "#85802c", long: true },
  { text: "ファイル名", color: "#2b7c88" },
  { text: "リセット", color: "#2f8a3a" },
  { text: "データ保存", color: "#1f7a2c", out: true },
  { text: "エラー出力", color: "#85802c", out: true },
  { text: "ファイル名出力", color: "#2b7c88", out: true },
];

const Diagram = () => (
  <>
    <Wires />
    {NODES.map((n) => (
      <Item key={n.label} $x={n.x} $y={n.y}>
        <NodeLabel>{n.label}</NodeLabel>
        <Terminal kind={n.kind} />
      </Item>
    ))}
    <Item $x={152} $y={136}><SimNode /></Item>
    <Item $x={199} $y={138}><FftNode /></Item>
    <Item $x={230} $y={71}><IndexNode /></Item>
    <Item $x={256} $y={81}><IndexNode /></Item>
    <Item $x={279} $y={54}><BuildNode /></Item>
    <Item $x={391} $y={107}><ConvertNode /></Item>
    <Item $x={410} $y={108} $w={51}>
      <Express>
        <ExpressHead>
          <svg width="17" height="17" viewBox="0 0 17 17">
            <rect x=".5" y=".5" width="16" height="16" rx="1" fill="#fff" stroke="#333" />
            <path d="M2 7h8l2 2v6H2z" fill="#8d9298" stroke="#333" strokeWidth=".8" />
            <path d="M4 11h6v4H4z" fill="#fff" stroke="#333" strokeWidth=".6" />
            <path d="M8 10l7-8" stroke="#222" strokeWidth="2" />
            <path d="M9 8.500l6-7" stroke="#ddd" strokeWidth=".6" />
          </svg>
          <div>計測ファイルに書<br />き込む</div>
        </ExpressHead>
        {ROWS.map((r) => (
          <ExpressRow key={r.text} $color={r.color} $out={r.out} $long={r.long}>
            <Pin />
            <RowText>{r.text}</RowText>
          </ExpressRow>
        ))}
        <ExpressFoot />
      </Express>
    </Item>
  </>
);

export default function App() {
  return (
    <>
      <GlobalStyle />
      <Desktop>
        <Frame title="FFTspectrumtest.vi フロントパネル *" indent={27} vScroll={[69, 381, 88]} hScroll={[77, 328, 62]}>
          <FrontPanel />
        </Frame>
        <Sliver>
          <SliverTop><ViIcon /></SliverTop>
          <SliverEnd><Arrow dir="right" /></SliverEnd>
        </Sliver>
        <Frame title="FFTspectrumtest.vi ブロックダイアグラム *" indent={27} diagram vScroll={[72, 370, 96]} hScroll={[4, 387, 76]}>
          <Diagram />
        </Frame>
      </Desktop>
    </>
  );
}
